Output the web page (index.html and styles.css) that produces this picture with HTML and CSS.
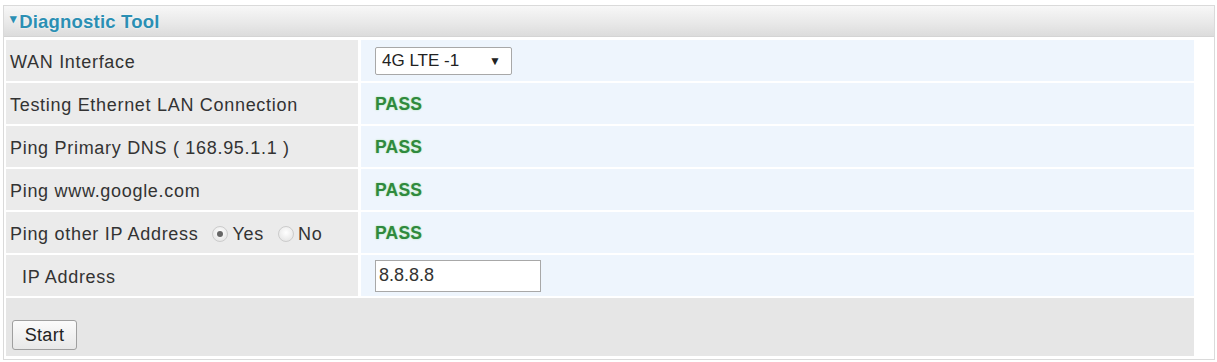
FILE: index.html
```html
<!DOCTYPE html>
<html>
<head>
<meta charset="utf-8">
<title>Diagnostic Tool</title>
<link rel="stylesheet" href="styles.css">
</head>
<body>
<div class="panel">
  <div class="panel-head"><span class="caret">&#9662;</span>Diagnostic Tool</div>
  <div class="rows">
    <div class="label">WAN Interface</div>
    <div class="value">
      <div class="select"><span>4G LTE -1</span><span class="arrow">&#9660;</span></div>
    </div>

    <div class="label">Testing Ethernet LAN Connection</div>
    <div class="value"><span class="pass">PASS</span></div>

    <div class="label">Ping Primary DNS ( 168.95.1.1 )</div>
    <div class="value"><span class="pass">PASS</span></div>

    <div class="label">Ping www.google.com</div>
    <div class="value"><span class="pass">PASS</span></div>

    <div class="label">Ping other IP Address
      <span class="radio checked"></span><span class="opt">Yes</span>
      <span class="radio"></span><span class="opt">No</span>
    </div>
    <div class="value"><span class="pass">PASS</span></div>

    <div class="label indent">IP Address</div>
    <div class="value"><div class="textbox">8.8.8.8</div></div>
  </div>
  <div class="actions">
    <div class="button">Start</div>
  </div>
</div>
</body>
</html>
```
FILE: styles.css
```css
html, body {
  margin: 0;
  padding: 0;
  background: #ffffff;
}

body {
  font-family: "Liberation Sans", Arial, sans-serif;
  font-size: 18px;
  color: #333333;
}

.panel {
  margin: 5px 2px 0 3px;
  border: 1px solid #dadada;
  padding-bottom: 3px;
}

.panel-head {
  height: 31px;
  display: flex;
  align-items: center;
  padding-left: 6px;
  padding-top: 1px;
  box-sizing: border-box;
  background: linear-gradient(#f7f7f7, #e9e9e9 55%, #dcdcdc);
  border-bottom: 1px solid #d4d4d4;
  color: #2b8fb3;
  font-weight: bold;
  font-size: 18.5px;
  letter-spacing: 0.2px;
  text-shadow: 0 0 2px #ffffff;
}

.caret {
  font-size: 13px;
  margin-right: 2px;
  position: relative;
  top: -3px;
}

.rows {
  display: grid;
  grid-template-columns: 352px 1fr;
  grid-auto-rows: 41px;
  gap: 2px 3px;
  padding: 3px 20px 0 2px;
}

.label {
  background: #ebebeb;
  display: flex;
  align-items: center;
  padding-left: 4px;
  padding-top: 3px;
  letter-spacing: 0.7px;
  white-space: nowrap;
}

.label.indent {
  padding-left: 16px;
}

.value {
  background: #eef5fd;
  display: flex;
  align-items: center;
  padding-left: 14px;
  padding-top: 2px;
}

.pass {
  color: #2f8a3e;
  font-weight: bold;
  font-size: 17.5px;
  letter-spacing: 0.2px;
  text-shadow: 0 0 2px #a8e0a8;
}

.select {
  border: 1px solid #a8a8a8;
  border-radius: 2px;
  background: #ffffff;
  display: flex;
  align-items: center;
  justify-content: space-between;
  padding: 0 10px 0 6px;
  box-sizing: border-box;
  width: 137px;
  height: 28px;
  font-size: 17px;
  color: #222222;
  margin-top: -2px;
}

.arrow {
  font-size: 12px;
  color: #222222;
}

.radio {
  display: inline-block;
  width: 16px;
  height: 16px;
  border-radius: 50%;
  border: 1px solid #cccccc;
  background: radial-gradient(circle at 50% 40%, #ffffff, #e0e0e0);
  box-sizing: border-box;
  margin: 0 4px 0 14px;
  position: relative;
}

.radio.checked::after {
  content: "";
  position: absolute;
  left: 4px;
  top: 4px;
  width: 6px;
  height: 6px;
  border-radius: 50%;
  background: #666666;
}

.textbox {
  width: 166px;
  height: 32px;
  box-sizing: border-box;
  border: 1px solid #a8a8a8;
  background: #ffffff;
  display: flex;
  align-items: center;
  padding-left: 3px;
  color: #333333;
  font-size: 18px;
  margin-top: -2px;
}

.actions {
  margin: 2px 20px 0 2px;
  height: 58px;
  background: #e6e6e6;
  padding: 22px 0 0 6px;
  box-sizing: border-box;
}

.button {
  display: inline-flex;
  align-items: center;
  justify-content: center;
  width: 65px;
  height: 30px;
  box-sizing: border-box;
  border: 1px solid #9f9f9f;
  border-radius: 3px;
  background: linear-gradient(#fbfbfb, #e8e8e8);
  color: #222222;
  font-size: 18px;
  letter-spacing: 0.3px;
}
```
